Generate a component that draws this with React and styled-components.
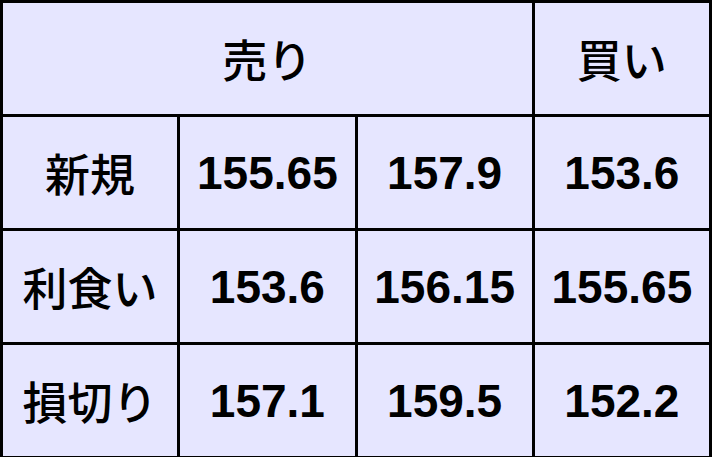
import React from 'react';
import styled, { createGlobalStyle } from 'styled-components';

const GlobalStyle = createGlobalStyle`
  html, body {
    margin: 0;
    padding: 0;
    background: #ffffff;
  }
`;

const Table = styled.table`
  width: 712px;
  height: 457px;
  border-collapse: collapse;
  table-layout: fixed;
  background: #e6e6ff;
  border: 3px solid #000;
`;

const Cell = styled.td`
  border: 3px solid #000;
  height: 111px;
  padding: 0;
  text-align: center;
  vertical-align: middle;
  color: #000;
  font-family: ${props => props.jp
    ? '"Noto Sans CJK JP", "Liberation Sans", sans-serif'
    : '"Liberation Sans", Arial, sans-serif'};
  font-weight: ${props => props.jp ? 500 : 700};
  font-size: ${props => props.jp ? '45px' : '46px'};
  line-height: 1;
`;

const rows = [
  { label: '新規', values: ['155.65', '157.9', '153.6'] },
  { label: '利食い', values: ['153.6', '156.15', '155.65'] },
  { label: '損切り', values: ['157.1', '159.5', '152.2'] },
];

const App = () => (
  <>
    <GlobalStyle />
    <Table>
      <colgroup>
        <col />
        <col />
        <col />
        <col />
      </colgroup>
      <tbody>
        <tr>
          <Cell jp colSpan={3}>売り</Cell>
          <Cell jp>買い</Cell>
        </tr>
        {rows.map(row => (
          <tr key={row.label}>
            <Cell jp>{row.label}</Cell>
            {row.values.map((v, i) => (
              <Cell key={i}>{v}</Cell>
            ))}
          </tr>
        ))}
      </tbody>
    </Table>
  </>
);

export default App;
